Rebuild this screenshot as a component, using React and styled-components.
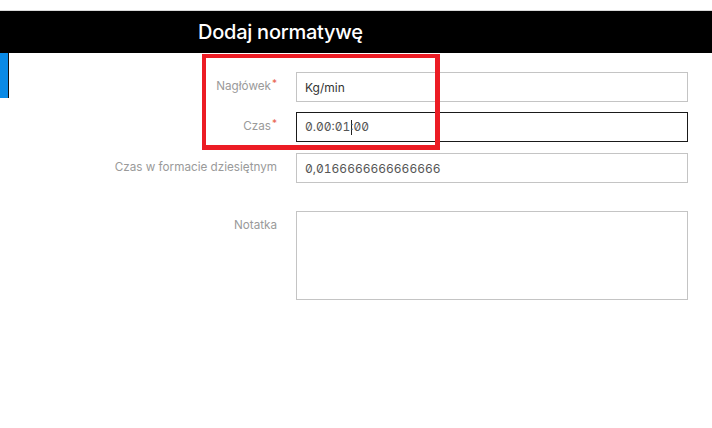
import React from "react";
import styled, { createGlobalStyle } from "styled-components";

const GlobalStyle = createGlobalStyle`
    html, body {
        margin: 0;
        padding: 0;
        background: #fff;
        font-family: Inter, "Liberation Sans", sans-serif;
    }
`;

const Page = styled.div`
    position: relative;
    width: 712px;
    height: 428px;
    overflow: hidden;
    background: #fff;
`;

const TopGap = styled.div`
    height: 10px;
    border-bottom: 1px solid #d9d9d9;
`;

const Header = styled.header`
    height: 42px;
    background: #000;
    display: flex;
    align-items: center;
    padding-left: 198px;
`;

const Title = styled.h1`
    margin: 0;
    color: #fff;
    font-size: 20px;
    font-weight: 500;
    letter-spacing: -0.25px;
`;

const Body = styled.div`
    display: flex;
    align-items: flex-start;
`;

const SideTab = styled.div`
    width: 8px;
    height: 45px;
    background: #0a8ae6;
    border-right: 1px solid #111;
    flex: none;
`;

const Form = styled.form`
    display: flex;
    flex-direction: column;
    padding-top: 19px;
`;

const Row = styled.div`
    display: grid;
    grid-template-columns: 268px 392px;
    column-gap: 19px;
    margin-bottom: ${p => p.$after || 0}px;
`;

const Label = styled.label`
    text-align: right;
    color: #9a9a9a;
    font-size: 11.7px;
    line-height: 15px;
    padding-top: 7px;
`;

const Required = styled.sup`
    color: #e8604a;
    font-size: 10px;
    margin-left: 1px;
    vertical-align: 3px;
    line-height: 0;
`;

const Field = styled.div`
    box-sizing: border-box;
    height: ${p => p.$tall ? 89 : 30}px;
    border: 1px solid ${p => p.$focused ? "#1a1a1a" : "#c4c4c4"};
    padding: 0 8px;
    display: flex;
    align-items: ${p => p.$tall ? "flex-start" : "center"};
    font-size: 12px;
    color: ${p => p.$mono ? "#555" : "#333"};
    font-feature-settings: "zero" 1, "tnum" 1;
    white-space: nowrap;
`;

const Caret = styled.span`
    display: inline-block;
    width: 1px;
    height: 15px;
    background: #222;
    margin: 0 -2px 0 1px;
    vertical-align: middle;
`;

const Annotation = styled.div`
    position: absolute;
    left: 202px;
    top: 54px;
    width: 238px;
    height: 96px;
    box-sizing: border-box;
    border-style: solid;
    border-color: #ec1c24;
    border-width: 4px 5px 5px 4px;
    pointer-events: none;
`;

export default function App() {
    return (
        <Page>
            <GlobalStyle />
            <TopGap />
            <Header>
                <Title>Dodaj normatywę</Title>
            </Header>
            <Body>
                <SideTab />
                <Form>
                    <Row $after={10}>
                        <Label>Nagłówek<Required>*</Required></Label>
                        <Field>Kg/min</Field>
                    </Row>
                    <Row $after={11}>
                        <Label>Czas<Required>*</Required></Label>
                        <Field $focused $mono>
                            <span>0.00:01<Caret />:00</span>
                        </Field>
                    </Row>
                    <Row $after={28}>
                        <Label>Czas w formacie dziesiętnym</Label>
                        <Field $mono>0,0166666666666666</Field>
                    </Row>
                    <Row>
                        <Label>Notatka</Label>
                        <Field $tall />
                    </Row>
                </Form>
            </Body>
            <Annotation />
        </Page>
    );
}
